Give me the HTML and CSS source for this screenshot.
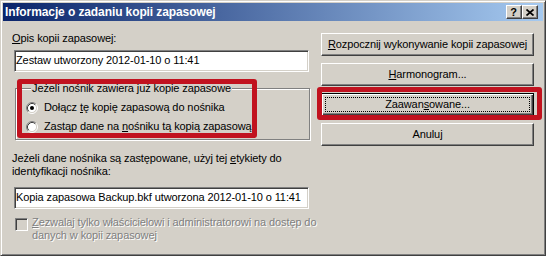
FILE: index.html
```html
<!DOCTYPE html>
<html lang="pl">
<head>
<meta charset="utf-8">
<title>Informacje o zadaniu kopii zapasowej</title>
<link rel="stylesheet" href="styles.css">
</head>
<body>
<div class="window">
  <div class="titlebar">
    <span class="title">Informacje o zadaniu kopii zapasowej</span>
    <div class="tbtns">
      <span class="tbtn help">?</span>
      <span class="tbtn close"><svg width="8" height="7" viewBox="0 0 8 7"><path d="M0.5 0.5 L7.5 6.5 M7.5 0.5 L0.5 6.5" stroke="#000" stroke-width="1.7" fill="none"/></svg></span>
    </div>
  </div>
  <div class="client">
    <div class="top">
      <div class="left">
        <div class="lbl"><u>O</u>pis kopii zapasowej:</div>
        <div class="edit edit1">Zestaw utworzony 2012-01-10 o 11:41</div>
        <fieldset class="group">
          <legend>Jeżeli nośnik zawiera już kopie zapasowe</legend>
          <div class="radio-row">
            <svg class="radio" width="12" height="12" viewBox="0 0 12 12"><circle cx="6" cy="6" r="4.5" fill="#fff"/><path d="M9.89 2.11 A5.5 5.5 0 0 0 2.11 9.89" stroke="#808080" fill="none"/><path d="M2.11 9.89 A5.5 5.5 0 0 0 9.89 2.11" stroke="#fff" fill="none"/><path d="M9.18 2.82 A4.5 4.5 0 0 0 2.82 9.18" stroke="#404040" fill="none"/><path d="M2.82 9.18 A4.5 4.5 0 0 0 9.18 2.82" stroke="#d4d0c8" fill="none"/><circle cx="6" cy="6" r="2" fill="#000"/></svg>
            <span>Dołącz <u>t</u>ę kopię zapasową do nośnika</span>
          </div>
          <div class="radio-row">
            <svg class="radio" width="12" height="12" viewBox="0 0 12 12"><circle cx="6" cy="6" r="4.5" fill="#fff"/><path d="M9.89 2.11 A5.5 5.5 0 0 0 2.11 9.89" stroke="#808080" fill="none"/><path d="M2.11 9.89 A5.5 5.5 0 0 0 9.89 2.11" stroke="#fff" fill="none"/><path d="M9.18 2.82 A4.5 4.5 0 0 0 2.82 9.18" stroke="#404040" fill="none"/><path d="M2.82 9.18 A4.5 4.5 0 0 0 9.18 2.82" stroke="#d4d0c8" fill="none"/></svg>
            <span>Zastąp dane na <u>n</u>ośniku tą kopią zapasową</span>
          </div>
        </fieldset>
      </div>
      <div class="right">
        <div class="btn"><u>R</u>ozpocznij wykonywanie kopii zapasowej</div>
        <div class="btn"><u>H</u>armonogram...</div>
        <div class="btn btn-focus">Zaawan<u>s</u>owane...</div>
        <div class="btn">Anuluj</div>
      </div>
    </div>
    <div class="lbl lbl2">Jeżeli dane nośnika są zastępowane, użyj tej <u>e</u>tykiety do<br>identyfikacji nośnika:</div>
    <div class="edit edit2">Kopia zapasowa Backup.bkf utworzona 2012-01-10 o 11:41</div>
    <div class="check-row">
      <span class="checkbox"></span>
      <span class="disabled-text"><u>Z</u>ezwalaj tylko właścicielowi i administratorowi na dostęp do<br>danych w kopii zapasowej</span>
    </div>
  </div>
  <div class="mark mark1"></div>
  <div class="mark mark2"></div>
</div>
</body>
</html>
```

FILE: styles.css
```css
html, body {
  margin: 0;
  padding: 0;
  background: #d4d0c8;
}

body {
  font-family: "Liberation Sans", Arial, sans-serif;
  font-size: 11px;
  line-height: 13px;
  letter-spacing: -0.1px;
  color: #000;
}

u {
  text-decoration: underline;
  text-underline-offset: 1px;
}

.window {
  position: relative;
  box-sizing: border-box;
  width: 546px;
  height: 256px;
  padding: 2px;
  background: #d4d0c8;
  border: 1px solid;
  border-color: #d4d0c8 #404040 #404040 #d4d0c8;
  box-shadow: inset 1px 1px 0 #fff, inset -1px -1px 0 #808080;
}

.titlebar {
  height: 18px;
  display: flex;
  align-items: center;
  justify-content: space-between;
  padding: 0 5px 0 2px;
  background: linear-gradient(to right, #0a246a, #a6caf0);
}

.title {
  color: #fff;
  font-weight: bold;
  font-size: 12px;
  letter-spacing: -0.1px;
  white-space: nowrap;
}

.tbtns {
  display: flex;
}

.tbtn {
  box-sizing: border-box;
  width: 16px;
  height: 14px;
  display: flex;
  align-items: center;
  justify-content: center;
  background: #d4d0c8;
  border: 1px solid;
  border-color: #fff #404040 #404040 #fff;
  box-shadow: inset -1px -1px 0 #808080;
}

.help {
  font-weight: bold;
  font-size: 11px;
  line-height: 11px;
  padding-right: 1px;
}

.close svg {
  display: block;
  margin-right: 1px;
}

.client {
  padding: 11px 0 0 9px;
}

.top {
  display: flex;
  gap: 12px;
  align-items: flex-start;
}

.left {
  width: 297px;
}

.lbl {
  white-space: nowrap;
}

.edit {
  box-sizing: border-box;
  width: 295px;
  height: 22px;
  margin-left: 2px;
  padding: 0 0 0 1px;
  line-height: 18px;
  background: #fff;
  border: 1px solid;
  border-color: #808080 #fff #fff #808080;
  box-shadow: inset 1px 1px 0 #404040, inset -1px -1px 0 #d4d0c8;
  white-space: nowrap;
  overflow: hidden;
}

.edit1 {
  margin-top: 5px;
}

.group {
  box-sizing: border-box;
  width: 295px;
  margin: 10px 0 0 3px;
  padding: 6px 0 6px 10px;
  border: 1px solid #808080;
  box-shadow: inset 1px 1px 0 #fff, 1px 1px 0 #fff;
  min-width: 0;
}

.group legend {
  margin-left: 5px;
  padding: 0 1px;
  background: #d4d0c8;
  line-height: 13px;
}

.radio-row {
  display: flex;
  align-items: center;
  gap: 6px;
  height: 13px;
  white-space: nowrap;
}

.radio-row + .radio-row {
  margin-top: 6px;
}

.radio {
  display: block;
  flex: none;
}

.right {
  width: 213px;
  margin-top: 1px;
  display: flex;
  flex-direction: column;
  gap: 7px;
}

.btn {
  box-sizing: border-box;
  height: 23px;
  display: flex;
  align-items: center;
  justify-content: center;
  background: #d4d0c8;
  border: 1px solid;
  border-color: #fff #404040 #404040 #fff;
  box-shadow: inset -1px -1px 0 #808080;
  white-space: nowrap;
}

.btn-focus {
  border-color: #000;
  box-shadow: inset 1px 1px 0 #fff, inset -1px -1px 0 #404040, inset -2px -2px 0 #808080;
  outline: 1px dotted #000;
  outline-offset: -5px;
}

.lbl2 {
  margin-top: 6px;
}

.edit2 {
  margin-top: 9px;
}

.check-row {
  display: flex;
  align-items: flex-start;
  gap: 4px;
  margin-top: 7px;
  margin-left: 3px;
}

.checkbox {
  box-sizing: border-box;
  flex: none;
  width: 13px;
  height: 13px;
  margin-top: 2px;
  background: #d4d0c8;
  border: 1px solid;
  border-color: #808080 #fff #fff #808080;
  box-shadow: inset 1px 1px 0 #404040, inset -1px -1px 0 #d4d0c8;
}

.disabled-text {
  color: #808080;
  text-shadow: 1px 1px 0 #fff;
  white-space: nowrap;
}

.mark {
  position: absolute;
  box-sizing: border-box;
  border: 5px solid #c1121f;
  border-radius: 3px;
  pointer-events: none;
}

.mark1 {
  left: 16px;
  top: 78px;
  width: 240px;
  height: 59px;
}

.mark2 {
  left: 316px;
  top: 86px;
  width: 225px;
  height: 33px;
}
```
